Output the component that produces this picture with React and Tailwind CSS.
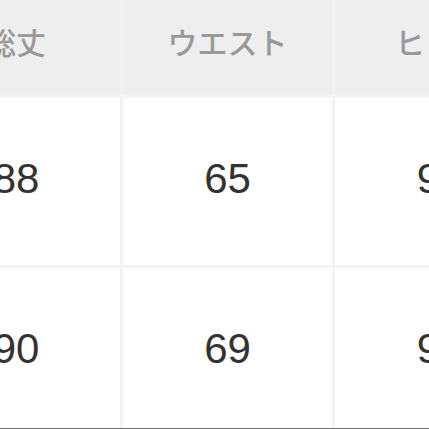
const headers = ['総丈', 'ウエスト', 'ヒップ']
const rows = [
  ['88', '65', '94'],
  ['90', '69', '96'],
]

export default function App() {
  return (
    <div className="w-[429px] h-[429px] overflow-hidden bg-[#f1f1f1]">
      <div className="ml-[-88px] w-[640px] grid grid-cols-[208px_209px_210px] gap-[3px] bg-[#f3f3f3]">
        {/* header */}
        {headers.map(h => (
          <div key={h}
            className="h-[95px] bg-[#eeeeee] flex items-center justify-center pb-[12px] text-[30px] font-medium text-[#999999]"
            style={{ fontFamily: '"Noto Sans CJK JP", "Noto Sans", sans-serif' }}>
            {h}
          </div>
        ))}

        {/* body */}
        {rows.map((r, i) => r.map((v, j) => (
          <div key={`${i}-${j}`}
            className={`bg-white flex items-center justify-center text-[42px] text-[#333333] ${i === 0 ? 'h-[167px] pb-[6px]' : 'h-[160px]'}`}
            style={{ fontFamily: '"Liberation Sans", Arial, sans-serif' }}>
            {v}
          </div>
        )))}
      </div>
      <div className="h-[2px] bg-[#6f6f6f]" />
    </div>
  )
}
